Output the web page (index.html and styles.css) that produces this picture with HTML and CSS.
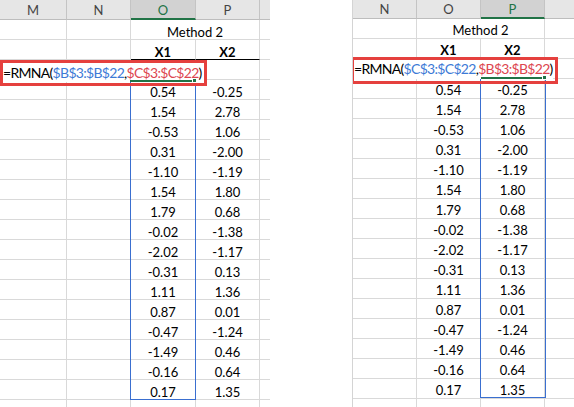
FILE: index.html
```html
<!DOCTYPE html>
<html>
<head>
<meta charset="utf-8">
<link rel="stylesheet" href="styles.css">
</head>
<body>
<div class="page">
  <div class="sheet sheet-l">
    <div class="hd">M</div><div class="hd">N</div><div class="hd sel">O</div><div class="hd">P</div><div class="hd end"></div>
    <div class="c"></div><div class="c"></div><div class="c merge">Method 2</div><div class="c end"></div>
    <div class="c"></div><div class="c"></div><div class="c bold under">X1</div><div class="c bold under">X2</div><div class="c end"></div>
    <div class="c"></div><div class="c"></div><div class="c"></div><div class="c"></div><div class="c end"></div>
    <div class="c"></div><div class="c"></div><div class="c">0.54</div><div class="c">-0.25</div><div class="c end"></div>
    <div class="c"></div><div class="c"></div><div class="c">1.54</div><div class="c">2.78</div><div class="c end"></div>
    <div class="c"></div><div class="c"></div><div class="c">-0.53</div><div class="c">1.06</div><div class="c end"></div>
    <div class="c"></div><div class="c"></div><div class="c">0.31</div><div class="c">-2.00</div><div class="c end"></div>
    <div class="c"></div><div class="c"></div><div class="c">-1.10</div><div class="c">-1.19</div><div class="c end"></div>
    <div class="c"></div><div class="c"></div><div class="c">1.54</div><div class="c">1.80</div><div class="c end"></div>
    <div class="c"></div><div class="c"></div><div class="c">1.79</div><div class="c">0.68</div><div class="c end"></div>
    <div class="c"></div><div class="c"></div><div class="c">-0.02</div><div class="c">-1.38</div><div class="c end"></div>
    <div class="c"></div><div class="c"></div><div class="c">-2.02</div><div class="c">-1.17</div><div class="c end"></div>
    <div class="c"></div><div class="c"></div><div class="c">-0.31</div><div class="c">0.13</div><div class="c end"></div>
    <div class="c"></div><div class="c"></div><div class="c">1.11</div><div class="c">1.36</div><div class="c end"></div>
    <div class="c"></div><div class="c"></div><div class="c">0.87</div><div class="c">0.01</div><div class="c end"></div>
    <div class="c"></div><div class="c"></div><div class="c">-0.47</div><div class="c">-1.24</div><div class="c end"></div>
    <div class="c"></div><div class="c"></div><div class="c">-1.49</div><div class="c">0.46</div><div class="c end"></div>
    <div class="c"></div><div class="c"></div><div class="c">-0.16</div><div class="c">0.64</div><div class="c end"></div>
    <div class="c"></div><div class="c"></div><div class="c">0.17</div><div class="c">1.35</div><div class="c end"></div>
    <div class="c"></div><div class="c"></div><div class="c"></div><div class="c"></div><div class="c end"></div>

    <div class="range range-l"></div>
    <div class="editor editor-l">=RMNA(<span class="ref-b">$B$3:$B$22</span>,<span class="ref-r">$C$3:$C$22</span>)<span class="caret"></span></div>
    <div class="active active-l"><span class="handle"></span></div>
    <div class="callout callout-l"></div>
  </div>

  <div class="sheet sheet-r">
    <div class="hd">N</div><div class="hd">O</div><div class="hd sel">P</div><div class="hd end"></div>
    <div class="c"></div><div class="c merge">Method 2</div><div class="c end"></div>
    <div class="c"></div><div class="c bold under">X1</div><div class="c bold under">X2</div><div class="c end"></div>
    <div class="c"></div><div class="c"></div><div class="c"></div><div class="c end"></div>
    <div class="c"></div><div class="c">0.54</div><div class="c">-0.25</div><div class="c end"></div>
    <div class="c"></div><div class="c">1.54</div><div class="c">2.78</div><div class="c end"></div>
    <div class="c"></div><div class="c">-0.53</div><div class="c">1.06</div><div class="c end"></div>
    <div class="c"></div><div class="c">0.31</div><div class="c">-2.00</div><div class="c end"></div>
    <div class="c"></div><div class="c">-1.10</div><div class="c">-1.19</div><div class="c end"></div>
    <div class="c"></div><div class="c">1.54</div><div class="c">1.80</div><div class="c end"></div>
    <div class="c"></div><div class="c">1.79</div><div class="c">0.68</div><div class="c end"></div>
    <div class="c"></div><div class="c">-0.02</div><div class="c">-1.38</div><div class="c end"></div>
    <div class="c"></div><div class="c">-2.02</div><div class="c">-1.17</div><div class="c end"></div>
    <div class="c"></div><div class="c">-0.31</div><div class="c">0.13</div><div class="c end"></div>
    <div class="c"></div><div class="c">1.11</div><div class="c">1.36</div><div class="c end"></div>
    <div class="c"></div><div class="c">0.87</div><div class="c">0.01</div><div class="c end"></div>
    <div class="c"></div><div class="c">-0.47</div><div class="c">-1.24</div><div class="c end"></div>
    <div class="c"></div><div class="c">-1.49</div><div class="c">0.46</div><div class="c end"></div>
    <div class="c"></div><div class="c">-0.16</div><div class="c">0.64</div><div class="c end"></div>
    <div class="c"></div><div class="c">0.17</div><div class="c">1.35</div><div class="c end"></div>
    <div class="c"></div><div class="c"></div><div class="c"></div><div class="c end"></div>

    <div class="range range-r"></div>
    <div class="editor editor-r">=RMNA(<span class="ref-b">$C$3:$C$22</span>,<span class="ref-r">$B$3:$B$22</span>)<span class="caret"></span></div>
    <div class="active active-r"><span class="handle"></span></div>
    <div class="callout callout-r"></div>
  </div>
</div>
</body>
</html>
```

FILE: styles.css
```css
* { box-sizing: border-box; }
html, body { margin: 0; padding: 0; }
body {
  width: 574px;
  height: 407px;
  overflow: hidden;
  background: #fff;
  font-family: Lato, "Liberation Sans", sans-serif;
  font-size: 13px;
  color: #000;
}
.page {
  display: flex;
  align-items: flex-start;
  height: 407px;
}
.sheet {
  position: relative;
  display: grid;
  grid-auto-rows: 20px;
  height: 407px;
  overflow: hidden;
}
.sheet-l {
  width: 270px;
  grid-template-columns: 67px 64px 65px 64px 10px;
  grid-template-rows: 20px;
}
.sheet-r {
  width: 222px;
  margin-left: 82px;
  border-left: 1px solid #d4d4d4;
  grid-template-columns: 64px 64px 64px 29px;
  grid-template-rows: 19px;
}
.hd {
  background: #e6e6e6;
  border-right: 1px solid #c4c4c4;
  border-bottom: 1px solid #bdbdbd;
  color: #444;
  text-align: center;
  padding-top: 2px;
  line-height: 16px;
}
.sheet-r .hd { padding-top: 1px; }
.hd.sel {
  background: #d2d2d2;
  color: #217346;
  border-bottom: 2px solid #217346;
}
.hd.end { border-right: none; }
.c {
  border-right: 1px solid #d9d9d9;
  border-bottom: 1px solid #d9d9d9;
  text-align: center;
  padding-top: 4px;
  line-height: 16px;
  white-space: nowrap;
}
.sheet-r .c { padding-top: 3px; }
.c.end { border-right: none; }
.c.merge { grid-column: span 2; }
.c.bold { font-weight: 700; }
.c.under { border-bottom-color: #000; }

.range {
  position: absolute;
  border: 1px solid #3a6fd0;
}
.range-l { left: 130px; top: 79px; width: 66px; height: 321px; }
.range-r { left: 127px; top: 77px; width: 66px; height: 321px; }

.editor {
  position: absolute;
  background: #fff;
  font-size: 14px;
  letter-spacing: -0.7px;
  line-height: 17px;
  white-space: nowrap;
}
.editor-l { left: 0; top: 60px; width: 205px; height: 22px; padding: 4px 0 0 3px; }
.editor-r { left: 0; top: 57px; width: 200px; height: 22px; padding: 3px 0 0 1px; }
.ref-b { color: #3d7ad6; }
.ref-r { color: #dd4650; }
.caret {
  display: inline-block;
  width: 1px;
  height: 18px;
  background: #000;
  margin-left: 2px;
  vertical-align: -4px;
}

.active {
  position: absolute;
  height: 2px;
  background: #217346;
}
.active-l { left: 130px; top: 80px; width: 62px; }
.active-r { left: 128px; top: 77px; width: 61px; }
.handle {
  position: absolute;
  right: -5px;
  top: -2px;
  width: 5px;
  height: 5px;
  background: #217346;
  border: 1px solid #fff;
}

.callout {
  position: absolute;
  border: 3px solid #e5403e;
}
.callout-l { left: 0; top: 60px; width: 207px; height: 26px; }
.callout-r { left: -2px; top: 57px; width: 207px; height: 27px; }
```
